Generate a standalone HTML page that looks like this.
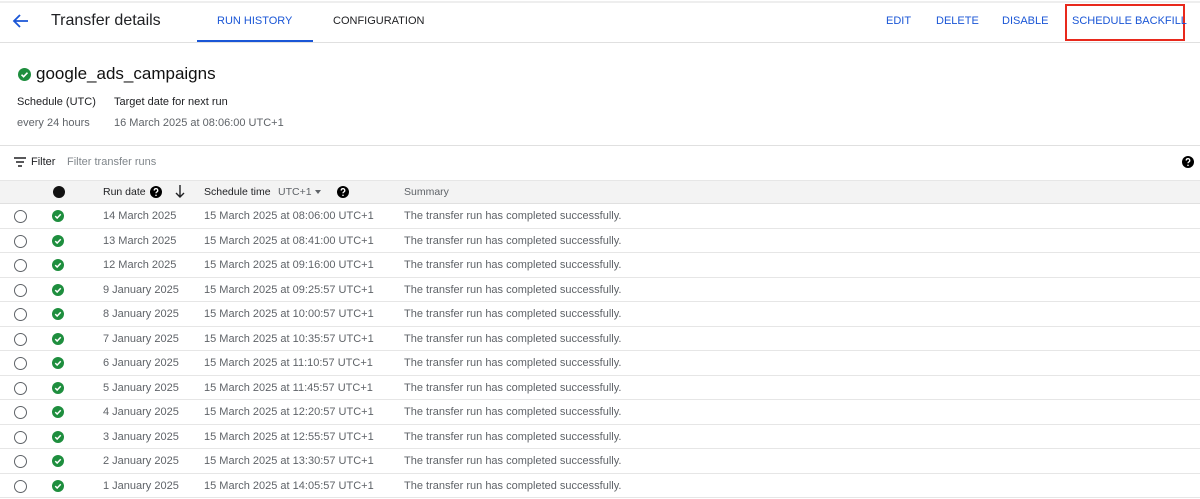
<!DOCTYPE html>
<html><head><style>
*{margin:0;padding:0;box-sizing:border-box}
body{width:1200px;height:499px;overflow:hidden;background:#fff;font-family:"Liberation Sans",Arial,sans-serif;color:#202124;position:relative}
.a{position:absolute;white-space:nowrap}
.hl{position:absolute;left:0;width:1200px;height:1px;background:#e0e0e0}
.tab{font-size:11px;letter-spacing:0}
.blue{color:#1a56d6}
.row{position:absolute;left:0;width:1200px;height:24.5px;border-bottom:1px solid #e6e6e6;font-size:11px;color:#5f6368}
.row span{position:absolute;top:6px}
.rad{position:absolute;left:14px;top:6px;width:13px;height:13px;border:1.5px solid #5f6368;border-radius:50%}
</style></head><body>
<div class="hl" style="top:1px;background:#eee;height:2px"></div>
<svg class="a" style="left:12px;top:13px" width="18" height="16" viewBox="0 0 18 16"><path d="M16 8H3M8 2L2 8l6 6" stroke="#1a56d6" stroke-width="1.8" fill="none"/></svg>
<div class="a" style="left:51px;top:12px;font-size:16px">Transfer details</div>
<div class="a tab blue" style="left:217px;top:15px">RUN HISTORY</div>
<div class="a" style="left:197px;top:40px;width:116px;height:2px;background:#1a56d6"></div>
<div class="a tab" style="left:333px;top:15px">CONFIGURATION</div>
<div class="a tab blue" style="left:886px;top:15px">EDIT</div>
<div class="a tab blue" style="left:936px;top:15px">DELETE</div>
<div class="a tab blue" style="left:1002px;top:15px">DISABLE</div>
<div class="a" style="left:1065px;top:4px;width:120px;height:37px;border:2.5px solid #e8291c"></div>
<div class="a tab blue" style="left:1072px;top:15px">SCHEDULE BACKFILL</div>
<div class="hl" style="top:42px"></div>
<svg class="a" style="left:18px;top:68px" width="13" height="13" viewBox="0 0 14 14"><circle cx="7" cy="7" r="7" fill="#1e8e3e"/><path d="M3.8 7.2l2.2 2.2 4.2-4.4" stroke="#fff" stroke-width="1.7" fill="none"/></svg>
<div class="a" style="left:36px;top:64px;font-size:17px;color:#111">google_ads_campaigns</div>
<div class="a" style="left:17px;top:96px;font-size:11px">Schedule (UTC)</div>
<div class="a" style="left:114px;top:96px;font-size:11px">Target date for next run</div>
<div class="a" style="left:17px;top:117px;font-size:11px;color:#5f6368">every 24 hours</div>
<div class="a" style="left:114px;top:117px;font-size:11px;color:#5f6368">16 March 2025 at 08:06:00 UTC+1</div>
<div class="hl" style="top:145px"></div>
<svg class="a" style="left:14px;top:157px" width="12" height="10" viewBox="0 0 12 10"><path d="M0 1h12M2 5h8M4 9h4" stroke="#202124" stroke-width="1.5"/></svg>
<div class="a" style="left:31px;top:156px;font-size:11px">Filter</div>
<div class="a" style="left:67px;top:156px;font-size:11px;color:#80868b">Filter transfer runs</div>
<svg class="a" style="left:1182px;top:156px" width="12" height="12" viewBox="0 0 24 24"><circle cx="12" cy="12" r="12"/><path d="M8.5 9a3.5 3.5 0 1 1 5 3c-1 .6-1.5 1.2-1.5 2.5" stroke="#fff" stroke-width="2.6" fill="none"/><circle cx="12" cy="18.5" r="1.6" fill="#fff"/></svg>
<div class="a" style="left:0;top:180px;width:1200px;height:24px;background:#f3f3f3;border-top:1px solid #e6e6e6;border-bottom:1px solid #e0e0e0"></div>
<div class="a" style="left:53px;top:186px;width:12px;height:12px;border-radius:50%;background:#111"></div>
<div class="a" style="left:103px;top:186px;font-size:10.5px">Run date</div>
<svg class="a" style="left:150px;top:186px" width="12" height="12" viewBox="0 0 24 24"><circle cx="12" cy="12" r="12"/><path d="M8.5 9a3.5 3.5 0 1 1 5 3c-1 .6-1.5 1.2-1.5 2.5" stroke="#fff" stroke-width="2.6" fill="none"/><circle cx="12" cy="18.5" r="1.6" fill="#fff"/></svg>
<svg class="a" style="left:175px;top:185px" width="10" height="13" viewBox="0 0 10 13"><path d="M5 0v12M1 8l4 4 4-4" stroke="#202124" stroke-width="1.4" fill="none"/></svg>
<div class="a" style="left:204px;top:186px;font-size:10.5px">Schedule time</div>
<div class="a" style="left:278px;top:186px;font-size:10.5px;color:#5f6368">UTC+1</div>
<div class="a" style="left:315px;top:190px;border-left:3.5px solid transparent;border-right:3.5px solid transparent;border-top:4px solid #5f6368"></div>
<svg class="a" style="left:337px;top:186px" width="12" height="12" viewBox="0 0 24 24"><circle cx="12" cy="12" r="12"/><path d="M8.5 9a3.5 3.5 0 1 1 5 3c-1 .6-1.5 1.2-1.5 2.5" stroke="#fff" stroke-width="2.6" fill="none"/><circle cx="12" cy="18.5" r="1.6" fill="#fff"/></svg>
<div class="a" style="left:404px;top:186px;font-size:10.5px;color:#5f6368">Summary</div>
<div id="rows"></div>
<script>
var d=[["14 March 2025","08:06:00"],["13 March 2025","08:41:00"],["12 March 2025","09:16:00"],["9 January 2025","09:25:57"],["8 January 2025","10:00:57"],["7 January 2025","10:35:57"],["6 January 2025","11:10:57"],["5 January 2025","11:45:57"],["4 January 2025","12:20:57"],["3 January 2025","12:55:57"],["2 January 2025","13:30:57"],["1 January 2025","14:05:57"]];
var h="";d.forEach(function(r,i){h+='<div class="row" style="top:'+(204+i*24.5)+'px"><div class="rad"></div><svg style="position:absolute;left:52px;top:6px" width="12" height="12" viewBox="0 0 14 14"><circle cx="7" cy="7" r="7" fill="#1e8e3e"/><path d="M3.8 7.2l2.2 2.2 4.2-4.4" stroke="#fff" stroke-width="1.7" fill="none"/></svg><span style="left:103px">'+r[0]+'</span><span style="left:204px">15 March 2025 at '+r[1]+' UTC+1</span><span style="left:404px">The transfer run has completed successfully.</span></div>'});
document.getElementById("rows").innerHTML=h;
</script>
</body></html>
